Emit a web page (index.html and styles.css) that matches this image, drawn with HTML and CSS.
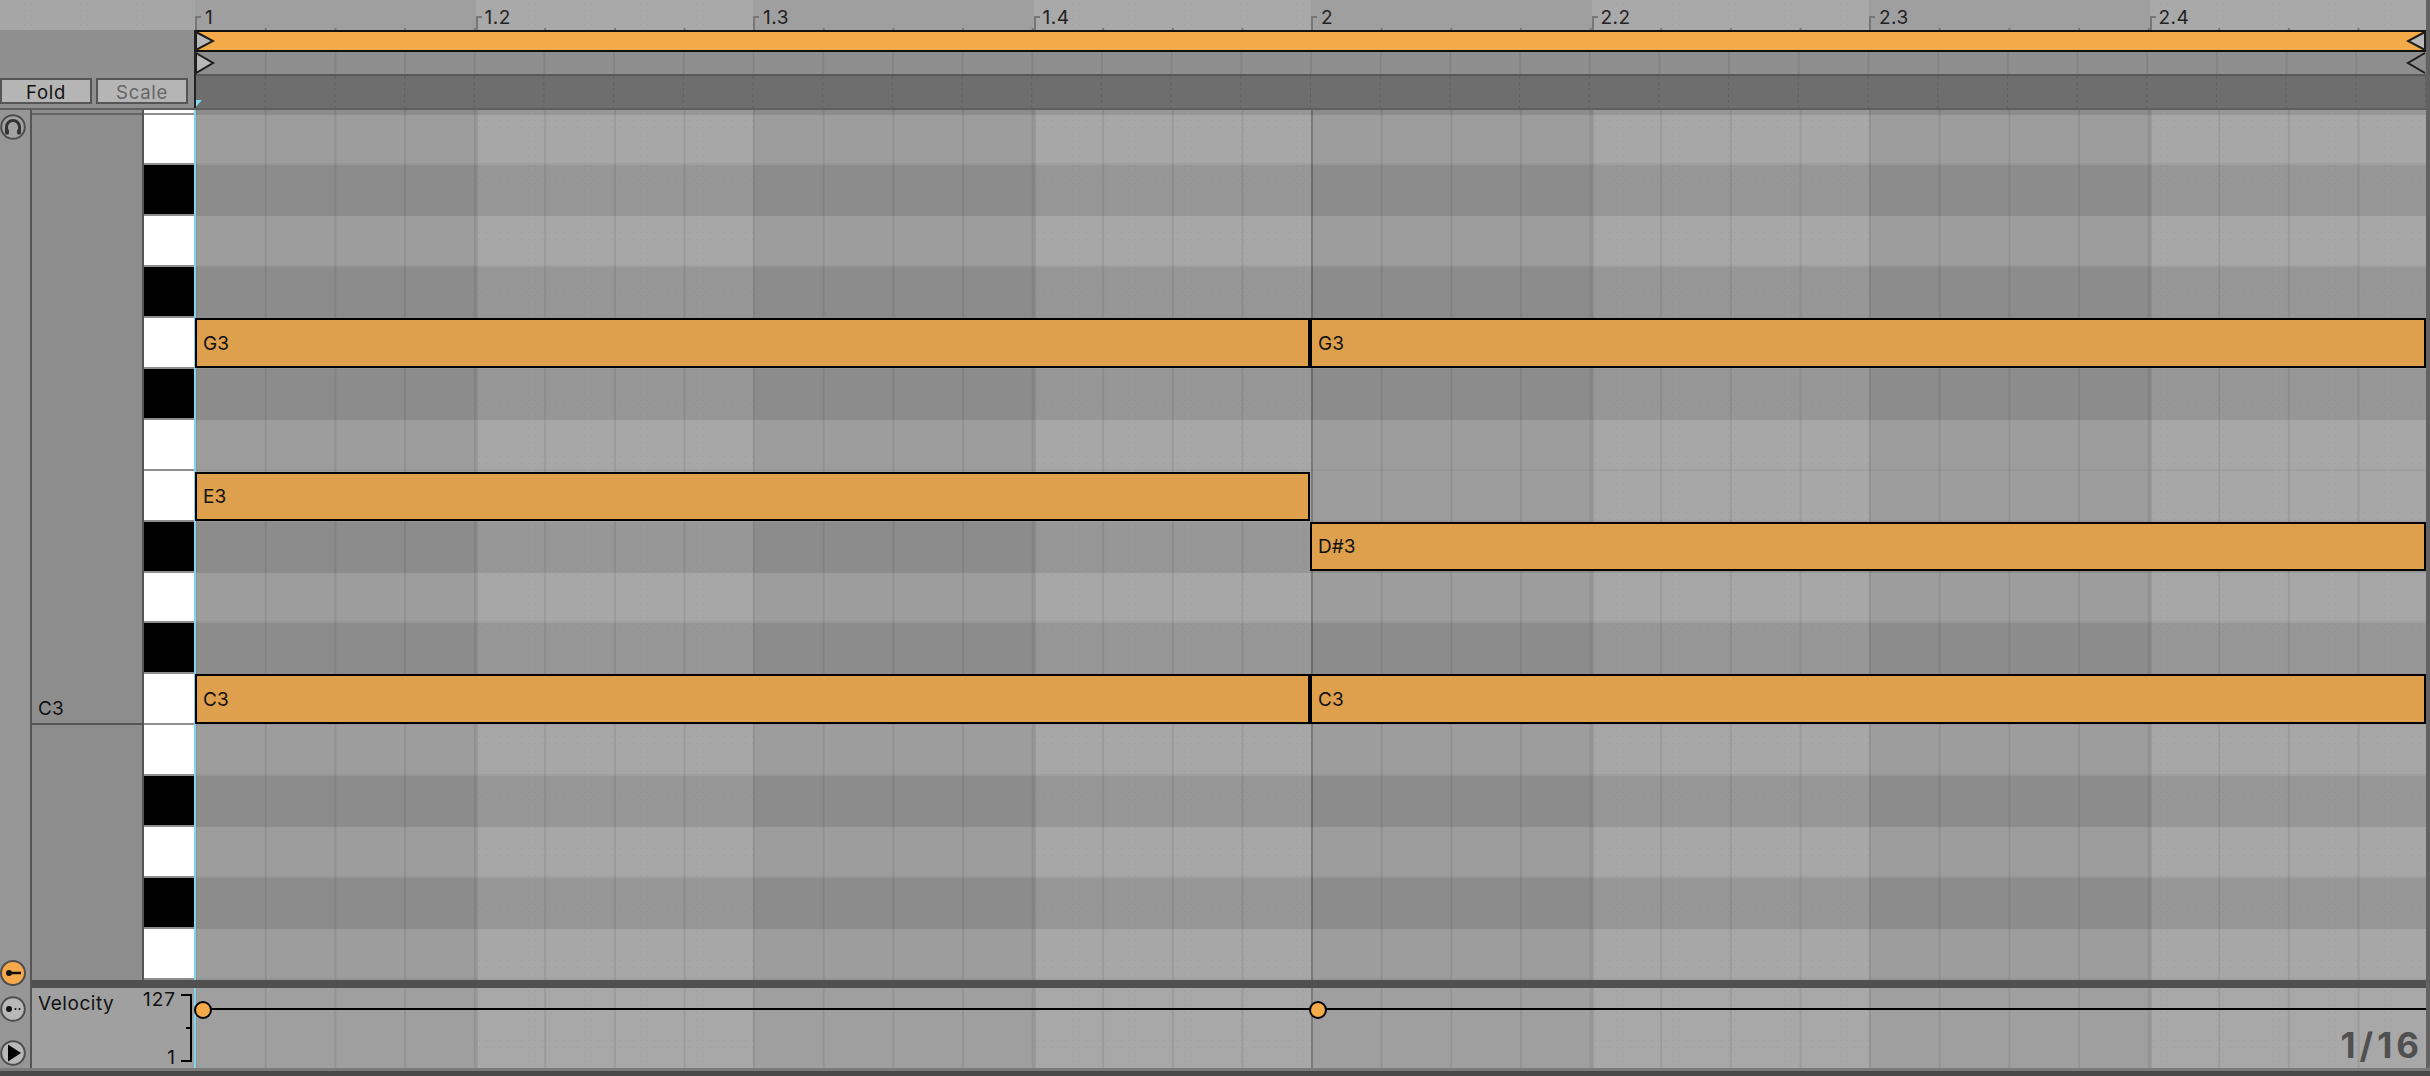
FILE: index.html
```html
<!DOCTYPE html>
<html lang="en">
<head>
<meta charset="utf-8">
<title>MIDI Note Editor</title>
<link rel="stylesheet" href="styles.css">
</head>
<body>
<div class="app">
  <header class="head">
    <div class="head-left">
      <div class="corner"></div>
      <div class="btn-panel">
        <button class="btn">Fold</button>
        <button class="btn btn-off">Scale</button>
      </div>
    </div>
    <div class="head-right">
      <div class="ruler">
        <div class="rbar"><span>1</span></div>
        <div class="rbar lite"><span>1.2</span></div>
        <div class="rbar"><span>1.3</span></div>
        <div class="rbar lite"><span>1.4</span></div>
        <div class="rbar"><span>2</span></div>
        <div class="rbar lite"><span>2.2</span></div>
        <div class="rbar"><span>2.3</span></div>
        <div class="rbar lite"><span>2.4</span></div>
      </div>
      <div class="loop">
        <svg class="mark mark-l" viewBox="0 0 20 20" width="20" height="20"><path d="M1 1L18 10L1 19Z" fill="#b8b8b8" stroke="#1c1c1c" stroke-width="2"/></svg>
        <svg class="mark mark-r" viewBox="0 0 20 20" width="20" height="20"><path d="M19 1L2 10L19 19Z" fill="#b8b8b8" stroke="#1c1c1c" stroke-width="2"/></svg>
      </div>
      <div class="brace">
        <svg class="mark mark-l" viewBox="0 0 20 22" width="20" height="22"><path d="M1 1L18 11L1 21Z" fill="#b8b8b8" stroke="#1c1c1c" stroke-width="2"/></svg>
        <svg class="mark mark-r" viewBox="0 0 20 22" width="20" height="22"><path d="M19 1L2 11L19 21" fill="none" stroke="#1c1c1c" stroke-width="2"/></svg>
      </div>
      <div class="fold-lane">
        <svg class="flag" viewBox="0 0 7 8" width="7" height="8"><path d="M0 8L0 0L7 0Z" fill="#7fd6ee"/></svg>
      </div>
    </div>
  </header>

  <main class="body">
    <aside class="side">
      <button class="round">
        <svg viewBox="0 0 26 26" width="26" height="26"><circle cx="13" cy="13" r="11.800" fill="#a2a2a2" stroke="#4d4d4d" stroke-width="2"/><path d="M6.500 17.500V13a6.500 6.500 0 0 1 13 0V17.500" fill="none" stroke="#333" stroke-width="3"/><rect x="5" y="15" width="4" height="5.500" rx="1.500" fill="#333"/><rect x="17" y="15" width="4" height="5.500" rx="1.500" fill="#333"/></svg>
      </button>
      <div class="side-low">
        <button class="round round-first">
          <svg viewBox="0 0 26 26" width="26" height="26"><circle cx="13" cy="13" r="12" fill="#f5a94a" stroke="#4d4d4d" stroke-width="2"/><circle cx="9" cy="13" r="3" fill="#111"/><path d="M9 13H21" stroke="#111" stroke-width="2.500"/></svg>
        </button>
        <button class="round">
          <svg viewBox="0 0 26 26" width="26" height="26"><circle cx="13" cy="13" r="11.800" fill="#b8b8b8" stroke="#4d4d4d" stroke-width="2"/><circle cx="9" cy="13" r="3" fill="#111"/><circle cx="15.500" cy="13" r="1" fill="#111"/><circle cx="19.500" cy="13" r="1" fill="#111"/></svg>
        </button>
        <button class="round">
          <svg viewBox="0 0 26 26" width="26" height="26"><circle cx="13" cy="13" r="11.800" fill="#b8b8b8" stroke="#4d4d4d" stroke-width="2"/><path d="M8 4.500L21 13L8 21.500Z" fill="#000"/></svg>
        </button>
      </div>
    </aside>

    <div class="work">
      <section class="roll">
        <div class="labels">
          <div class="label-sliver"></div>
          <div class="label-oct"><span>C3</span></div>
          <div class="label-rest"></div>
        </div>
        <div class="keys">
          <i class="key-sliver"></i>
          <i class="key w"></i><i class="key b"></i><i class="key w"></i><i class="key b"></i>
          <i class="key w"></i><i class="key b"></i><i class="key w"></i><i class="key w"></i>
          <i class="key b"></i><i class="key w"></i><i class="key b"></i><i class="key w"></i>
          <i class="key w"></i><i class="key b"></i><i class="key w"></i><i class="key b"></i>
          <i class="key w"></i>
        </div>
        <div class="lanes">
          <div class="rows">
            <i class="row-sliver"></i>
            <i class="row"></i><i class="row d"></i><i class="row"></i><i class="row d"></i>
            <i class="row"></i><i class="row d"></i><i class="row"></i><i class="row"></i>
            <i class="row d"></i><i class="row"></i><i class="row d"></i><i class="row"></i>
            <i class="row"></i><i class="row d"></i><i class="row"></i><i class="row d"></i>
            <i class="row"></i>
          </div>
          <div class="beats">
            <i class="beat"></i><i class="beat lite"></i><i class="beat"></i><i class="beat lite"></i>
            <i class="beat bar"></i><i class="beat lite"></i><i class="beat"></i><i class="beat lite"></i>
          </div>
          <div class="notes">
            <div class="note n-g3a">G3</div>
            <div class="note n-g3b">G3</div>
            <div class="note n-e3">E3</div>
            <div class="note n-ds3">D#3</div>
            <div class="note n-c3a">C3</div>
            <div class="note n-c3b">C3</div>
          </div>
        </div>
      </section>

      <div class="divider"></div>

      <section class="vel">
        <div class="vel-panel">
          <span class="vel-name">Velocity</span>
          <div class="vel-scale">
            <span>127</span>
            <span>1</span>
          </div>
          <svg class="vel-axis" viewBox="0 0 11 68" width="11" height="68"><path d="M0 1H10V67H0M5 34H10" fill="none" stroke="#000" stroke-width="2"/></svg>
        </div>
        <div class="lanes vel-lane">
          <div class="beats vel-beats">
            <i class="beat"></i><i class="beat lite"></i><i class="beat"></i><i class="beat lite"></i>
            <i class="beat bar"></i><i class="beat lite"></i><i class="beat"></i><i class="beat lite"></i>
          </div>
          <div class="vel-lines">
            <div class="stem"></div>
            <div class="stem"></div>
          </div>
          <div class="grid-size">1/16</div>
        </div>
      </section>
    </div>
  </main>
  <footer class="foot"></footer>
</div>
</body>
</html>
```
FILE: styles.css
```css
:root {
  --beats: repeat(3, 280.5px 277.5px) 280.5px 1fr;
  --font: "Inter", "Liberation Sans", sans-serif;
  --dots: radial-gradient(circle, rgba(0, 0, 0, .055) 0.8px, transparent 1px);
  --sub: 69.7px;
}
* { box-sizing: border-box; }
html, body { margin: 0; height: 100%; }
body { font-family: var(--font); overflow: hidden; background: #626262; }
.app {
  width: 2430px; height: 1076px; display: flex; flex-direction: column;
  background: #626262; color: #111;
}

/* header */
.head { display: flex; height: 110px; padding-right: 4px; flex: none; }
.head-left { width: 195px; flex: none; display: flex; flex-direction: column; }
.corner {
  height: 30px; background-color: #a6a6a6;
  background-image: var(--dots); background-size: 7px 7px;
}
.btn-panel {
  flex: 1; background: #8f8f8f; display: flex; gap: 4px; align-items: flex-end;
  padding-bottom: 4px; border-bottom: 2px solid #5f5f5f;
}
.btn {
  width: 92px; height: 26px; padding: 1px 0 0; margin: 0; border: 2px solid #555;
  background: #b5b5b5; color: #111; font: 400 18.500px/20px var(--font);
  letter-spacing: .7px; text-align: center;
}
.btn-off { color: #666; }
.head-right { flex: 1; display: flex; flex-direction: column; position: relative; }
.head-right::before {
  content: ""; position: absolute; z-index: 3; left: -1px; top: 30px; bottom: 2px;
  width: 2px; background: #222;
}
.ruler { height: 30px; display: grid; grid-template-columns: var(--beats); }
.rbar {
  position: relative; display: flex; align-items: flex-end; padding: 0 0 1px 10px;
  background-color: #9f9f9f;
  background-image: linear-gradient(to right, #777 2px, transparent 2px);
  background-size: var(--sub) 2px; background-position: 0 100%; background-repeat: repeat-x;
}
.rbar.lite {
  padding-left: 9px;
  background-color: #a9a9a9;
  background-image: linear-gradient(to right, #777 2px, transparent 2px), var(--dots);
  background-size: var(--sub) 2px, 7px 7px;
  background-position: -1.5px 100%, 0 0;
  background-repeat: repeat-x, repeat;
}
.rbar::before {
  content: ""; position: absolute; left: 0; bottom: 0; width: 4px; height: 12px;
  border-left: 2px solid #777; border-top: 2px solid #777;
}
.rbar span { font-size: 19px; line-height: 22px; letter-spacing: .5px; color: #222; }
.loop {
  height: 22px; position: relative;
  border-top: 2px solid #111; border-bottom: 2px solid #111; background: #f5aa49;
}
.brace {
  height: 22px; position: relative; background-color: #8e8e8e;
  background-image: linear-gradient(to right, #838383 2px, transparent 2px);
  background-size: var(--sub) 100%;
}
.mark { display: block; position: absolute; }
.mark-l { left: 0; }
.mark-r { right: 0; }
.loop .mark { top: -1px; }
.fold-lane {
  flex: 1; position: relative;
  border-top: 2px solid #5a5a5a; border-bottom: 2px solid #5f5f5f;
  background:
    repeating-linear-gradient(to bottom, transparent 0 3px, #6e6e6e 3px 6px),
    linear-gradient(to right, #5f5f5f 1px, transparent 1px) 0 0 / var(--sub) 100%,
    #6e6e6e;
}
.flag { position: absolute; left: 0; bottom: 0; display: block; }

/* body */
.body { flex: 1; display: flex; min-height: 0; }
.side {
  width: 32px; flex: none; background: #969696; border-right: 2px solid #555;
  display: flex; flex-direction: column; padding: 4px 0 2px;
}
.round { width: 26px; height: 26px; padding: 0; border: 0; background: none; display: block; }
.round svg { display: block; }
.side-low {
  margin-top: auto; display: flex; flex-direction: column; gap: 9px;
}
.side-low .round-first { margin-bottom: 1px; }
.side-low .round:last-child { margin-top: 9px; }
.work { flex: 1; display: flex; flex-direction: column; min-width: 0; padding-right: 4px; }

.roll { height: 870px; display: flex; flex: none; }
.labels {
  width: 112px; flex: none; background: #8d8d8d; border-right: 2px solid #555;
  display: flex; flex-direction: column;
}
.label-sliver { height: 4.5px; border-bottom: 2px solid #666; }
.label-oct {
  height: 610.8px; border-bottom: 2px solid #555; display: flex; align-items: flex-end;
  padding: 0 0 3px 6px; font-size: 19px; line-height: 22px;
}
.label-rest { flex: 1; }
.keys {
  width: 51px; flex: none; display: grid;
  grid-template-rows: 4.5px repeat(17, 50.9px); background: #8e8e8e;
}
.key-sliver { display: block; background: #fff; border-bottom: 2px solid #8e8e8e; }
.key { display: block; border-bottom: 2px solid #8e8e8e; }
.key.w { background: #fff; }
.key.b { background: #000; }

.lanes { flex: 1; display: grid; position: relative; min-width: 0; }
.lanes > * { grid-area: 1 / 1; min-width: 0; }
.lanes::before {
  content: ""; position: absolute; left: -1px; top: 0; bottom: 0; width: 2px;
  background: #7fd6ee; z-index: 1;
}
.rows { display: grid; grid-template-rows: 4.5px repeat(17, 50.9px); }
.row-sliver { display: block; background: #8c8c8c; }
.row { display: block; background: #9d9d9d; border-bottom: 2px solid #969696; }
.row.d { background: #8c8c8c; border-bottom: 0; }
.beats { display: grid; grid-template-columns: var(--beats); }
.beat {
  display: block;
  background-image: linear-gradient(to right, rgba(0, 0, 0, .075) 2px, transparent 2px);
  background-size: var(--sub) 100%;
}
.beat.lite {
  background-color: rgba(255, 255, 255, .1);
  background-image:
    linear-gradient(to right, rgba(0, 0, 0, .075) 2px, transparent 2px),
    linear-gradient(to right, rgba(0, 0, 0, .075) 2px, transparent 2px),
    var(--dots);
  background-size: 2px 100%, var(--sub) 100%, 7px 7px;
  background-position: 0 0, -1.5px 0, 0 0;
  background-repeat: no-repeat, repeat-x, repeat;
}
.beat.bar {
  background-image:
    linear-gradient(to right, rgba(0, 0, 0, .17) 2px, transparent 2px),
    linear-gradient(to right, rgba(0, 0, 0, .075) 2px, transparent 2px);
  background-size: 2px 100%, var(--sub) 100%;
  background-repeat: no-repeat, repeat;
}
.notes {
  position: relative; z-index: 2; display: grid;
  grid-template-columns: 1116px 1fr;
  grid-template-rows: 4.5px repeat(17, 50.9px);
}
.note {
  background: #dfa04e; border: 2px solid #000; margin-bottom: 1px;
  font-size: 19px; line-height: 46px; padding: 1px 0 0 6px; color: #111;
  overflow: hidden;
}
.n-g3a { grid-row: 6; grid-column: 1; margin-right: 1px; }
.n-g3b { grid-row: 6; grid-column: 2; margin-left: -1px; }
.n-e3 { grid-row: 9; grid-column: 1; margin: 1px 1px 1px 0; padding-top: 0; }
.n-ds3 { grid-row: 10; grid-column: 2; margin: 0 0 2px -1px; padding-top: 0; }
.n-c3a { grid-row: 13; grid-column: 1; margin-right: 1px; }
.n-c3b { grid-row: 13; grid-column: 2; margin-left: -1px; }

.divider { height: 8px; flex: none; background: #505050; }

.vel { flex: 1; display: flex; min-height: 0; }
.vel-panel {
  width: 163px; flex: none; background: #a0a0a0; display: flex;
  padding: 4px 3px 0 6px; font-size: 19px;
}
.vel-name { flex: 1; line-height: 24px; letter-spacing: .55px; }
.vel-scale {
  display: flex; flex-direction: column; justify-content: space-between; align-items: flex-end;
  height: 80px; margin: -3px 5px 0 0; line-height: 22px; font-size: 19px; letter-spacing: 1px;
}
.vel-axis { display: block; margin-top: 2px; }
.vel-lane { background: #9f9f9f; }
.vel-beats { height: 100%; }
.vel-lines { position: relative; z-index: 2; display: grid; grid-template-columns: 1116px 1fr; padding-top: 20px; }
.stem { height: 2px; background: #000; position: relative; }
.stem::before {
  content: ""; position: absolute; left: -2px; top: -7px; width: 14px; height: 14px;
  border-radius: 50%; background: #f5aa49; border: 2.500px solid #000;
}
.stem:first-child::before { left: -1px; }
.grid-size {
  position: relative; z-index: 2; justify-self: end; align-self: end;
  font-size: 35px; font-weight: 700; line-height: 40px; color: #505050;
  letter-spacing: 4px; padding: 0 3px 0 0; margin-bottom: 3px;
}
.foot { height: 8px; flex: none; background: #484848; border-top: 3px solid #7a7a7a; }
```
